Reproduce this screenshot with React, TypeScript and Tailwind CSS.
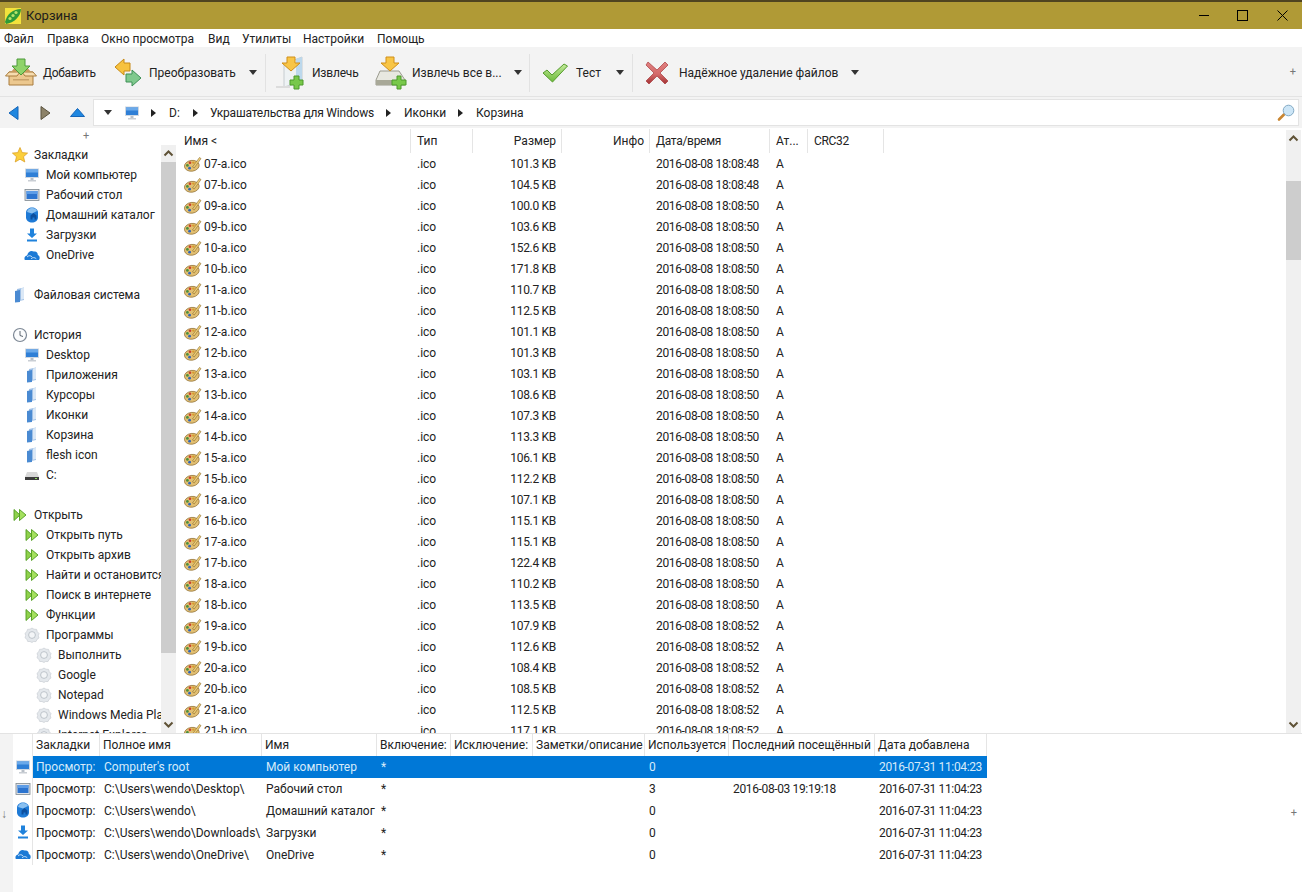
import type { ReactNode } from "react";

const FILES: [string, string, string][] = [
  ["07-a.ico", "101.3 KB", "48"], ["07-b.ico", "104.5 KB", "48"], ["09-a.ico", "100.0 KB", "50"], ["09-b.ico", "103.6 KB", "50"],
  ["10-a.ico", "152.6 KB", "50"], ["10-b.ico", "171.8 KB", "50"], ["11-a.ico", "110.7 KB", "50"], ["11-b.ico", "112.5 KB", "50"],
  ["12-a.ico", "101.1 KB", "50"], ["12-b.ico", "101.3 KB", "50"], ["13-a.ico", "103.1 KB", "50"], ["13-b.ico", "108.6 KB", "50"],
  ["14-a.ico", "107.3 KB", "50"], ["14-b.ico", "113.3 KB", "50"], ["15-a.ico", "106.1 KB", "50"], ["15-b.ico", "112.2 KB", "50"],
  ["16-a.ico", "107.1 KB", "50"], ["16-b.ico", "115.1 KB", "50"], ["17-a.ico", "115.1 KB", "50"], ["17-b.ico", "122.4 KB", "50"],
  ["18-a.ico", "110.2 KB", "50"], ["18-b.ico", "113.5 KB", "50"], ["19-a.ico", "107.9 KB", "52"], ["19-b.ico", "112.6 KB", "52"],
  ["20-a.ico", "108.4 KB", "52"], ["20-b.ico", "108.5 KB", "52"], ["21-a.ico", "112.5 KB", "52"], ["21-b.ico", "117.1 KB", "52"],
];

function Monitor() {
  return (
    <svg width="16" height="16" viewBox="0 0 16 16">
      <rect x="1" y="1.5" width="14" height="9.5" fill="#cfd8e2" />
      <rect x="2" y="2.5" width="12" height="7.5" fill="#2f7fd6" />
      <rect x="2" y="2.5" width="12" height="3" fill="#6aa9ea" />
      <rect x="6.5" y="11" width="3" height="2" fill="#b9c0c8" />
      <rect x="4" y="13" width="8" height="1.5" fill="#c9ced4" />
    </svg>
  );
}

function Desktop() {
  return (
    <svg width="16" height="16" viewBox="0 0 16 16">
      <rect x="1" y="2.5" width="14" height="11" fill="#dfe3e8" stroke="#7d8790" strokeWidth="0.8" />
      <rect x="2.5" y="4" width="11" height="8" fill="#2c74cf" />
      <rect x="2.5" y="4" width="11" height="3" fill="#5d9ce6" />
    </svg>
  );
}

function HomeDir() {
  return (
    <svg width="16" height="16" viewBox="0 0 16 16">
      <path d="M8 .5C11 .5 14 2.5 14 5.5V10.5C14 13.5 11 15.5 8 15.5C5 15.5 2 13.5 2 10.5V5.5C2 2.5 5 .5 8 .5Z" fill="#1e7ad6" />
      <path d="M8 1C10.5 1 12.5 2.3 13 4L8 6.5L3 5C3.5 2.5 5.5 1 8 1Z" fill="#8ac0f0" />
      <path d="M9.5 6L6.5 8.5V12.5H8.5V10.5H10.5V12.5H12.5V8.5Z" fill="#0d4f9e" />
    </svg>
  );
}

function Download() {
  return (
    <svg width="16" height="16" viewBox="0 0 16 16">
      <path d="M6 1.5H10V6.5H13L8 11L3 6.5H6Z" fill="#1f82dc" />
      <rect x="3" y="12.5" width="10" height="2" fill="#1f82dc" />
    </svg>
  );
}

function Cloud() {
  return (
    <svg width="16" height="16" viewBox="0 0 16 16">
      <path d="M.8 13C-.2 11 1 8.5 3.2 8.5C3.6 5 7 3 9.8 4.6C12 3.8 14 5.4 13.8 8C15.8 8.6 16.2 11.5 15 13Z" fill="#1c7ad6" />
      <path d="M3 10C4.5 8.3 6.8 8.3 8.2 10M7 11.8C8.5 10.2 10.8 10.2 12.3 11.8" stroke="#e6f2fc" strokeWidth="0.8" fill="none" />
    </svg>
  );
}

function Star() {
  return (
    <svg width="16" height="16" viewBox="0 0 16 16">
      <path d="M8 .5L10.2 5.6L15.6 6.1L11.5 9.7L12.8 15L8 12.2L3.2 15L4.5 9.7L.4 6.1L5.8 5.6Z" fill="#fbcf3c" stroke="#d99a1c" strokeWidth="0.7" />
    </svg>
  );
}

function FsDoc() {
  return (
    <svg width="16" height="16" viewBox="0 0 16 16">
      <path d="M5 2L12 .5V13L5 14.5Z" fill="#9fc0e6" />
      <path d="M3 4L8 3V15L3 15.5Z" fill="#4a8ad2" />
      <path d="M9 1.5L12 .8V12L9 12.8Z" fill="#dbe8f6" />
    </svg>
  );
}

function Clock() {
  return (
    <svg width="16" height="16" viewBox="0 0 16 16">
      <circle cx="8" cy="8" r="6.5" fill="#fbfcfd" stroke="#7c8794" strokeWidth="1.2" />
      <path d="M8 4V8.5L11 9.5" stroke="#5d6670" strokeWidth="1" fill="none" />
    </svg>
  );
}

function Drive() {
  return (
    <svg width="16" height="16" viewBox="0 0 16 16">
      <path d="M3 5H13L15 10H1Z" fill="#d8d8d8" />
      <rect x="1" y="10" width="14" height="3" fill="#3d3d3d" />
      <rect x="11" y="11" width="2" height="1" fill="#8fdc5c" />
    </svg>
  );
}

function Forward() {
  return (
    <svg width="16" height="16" viewBox="0 0 16 16">
      <path d="M2 2.5L8 8L2 13.5Z" fill="#8fd24c" stroke="#4e9a1e" strokeWidth="0.9" />
      <path d="M7.5 2.5L14 8L7.5 13.5Z" fill="#a4e05e" stroke="#4e9a1e" strokeWidth="0.9" />
    </svg>
  );
}

function Gear() {
  return (
    <svg width="16" height="16" viewBox="0 0 16 16">
      <path d="M8 1L10 2.2L12.6 2.4L13.3 4.7L15 6.5L14.3 8.8L15 11L13 12.4L12 14.6L9.6 14.5L8 15.5L6 14.5L3.7 14.5L2.9 12.3L1 10.8L1.7 8.5L1 6.3L2.8 4.7L3.5 2.4L6 2.2Z" fill="#e4e8ec" stroke="#c2c8ce" strokeWidth="0.6" />
      <circle cx="8" cy="8" r="3.4" fill="#f3f5f7" stroke="#b8bec5" strokeWidth="0.9" />
    </svg>
  );
}

function Palette() {
  return (
    <svg width="18" height="16" viewBox="0 0 18 16">
      <ellipse cx="7.8" cy="9.8" rx="7.4" ry="5.4" transform="rotate(-8 7.8 9.8)" fill="#e2bf72" stroke="#8f6d30" strokeWidth="0.7" />
      <circle cx="3.4" cy="9.4" r="1.4" fill="#4b8f3e" />
      <circle cx="6" cy="6.8" r="1.3" fill="#c9402c" />
      <circle cx="9.4" cy="6.6" r="1.2" fill="#d89a2c" />
      <circle cx="5.6" cy="12.2" r="1.4" fill="#3167b8" />
      <path d="M8.5 11L15.5 1.5L17 2.6L10.2 12Z" fill="#efcf78" stroke="#8a6a2c" strokeWidth="0.6" />
    </svg>
  );
}

function Caret() {
  return <div className="w-0 h-0 border-x-[4px] border-x-transparent border-t-[5px] border-t-[#333]" />;
}

function Sep() {
  return <div className="w-px h-[38px] bg-[#e2e2e2]" />;
}

function Crumb() {
  return <div className="w-0 h-0 border-y-[4px] border-y-transparent border-l-[5px] border-l-[#222]" />;
}

function AddIcon() {
  return (
    <svg width="32" height="32" viewBox="0 0 32 32">
      <path d="M4 15H28V28H4Z" fill="#ecc88f" stroke="#a97c3e" />
      <path d="M4 15L0.5 19H12L15 15ZM28 15L31.5 19H20L17 15Z" fill="#f6dcaf" stroke="#a97c3e" />
      <path d="M6 15L11 9H21L26 15Z" fill="#c99a5c" />
      <path d="M12 2H20V9H25L16 18L7 9H12Z" fill="#8fd36a" stroke="#4d9a3b" />
      <rect x="8" y="22" width="16" height="1.5" fill="#c9a26b" />
    </svg>
  );
}

function ConvertIcon() {
  return (
    <svg width="28" height="30" viewBox="0 0 28 30">
      <path d="M1 9L10 1V5H16V13H10V17Z" fill="#f7c23f" stroke="#c78a16" />
      <path d="M27 20L18 12V16H12V24H18V28Z" fill="#7fc98d" stroke="#3e8f57" />
    </svg>
  );
}

function ExtractIcon() {
  return (
    <svg width="32" height="34" viewBox="0 0 32 34">
      <path d="M8 8L26 1V26L8 31Z" fill="#eef2f4" stroke="#c6ccd0" />
      <path d="M20 3L26 1V26L20 27Z" fill="#bcd8ec" />
      <path d="M11 1H19V7H24L15 15L6 7H11Z" fill="#f8c546" stroke="#d08f18" />
      <rect x="0" y="30" width="14" height="2" fill="#dcdcdc" />
      <path d="M18 20H23V24H27V29H23V33H18V29H14V24H18Z" fill="#78c84a" stroke="#4d9a2a" />
    </svg>
  );
}

function ExtractAllIcon() {
  return (
    <svg width="32" height="34" viewBox="0 0 32 34">
      <path d="M5 15H24L30 24V29H1V24Z" fill="#e8e8e0" stroke="#9a9a8e" />
      <rect x="1" y="24" width="29" height="5" fill="#a8a898" />
      <path d="M11 1H19V7H24L15 15L6 7H11Z" fill="#f8c546" stroke="#d08f18" />
      <path d="M22 20H26V24H31V29H26V33H22V29H17V24H22Z" fill="#78c84a" stroke="#4d9a2a" />
    </svg>
  );
}

function CheckIcon() {
  return (
    <svg width="26" height="20" viewBox="0 0 26 20">
      <defs>
        <linearGradient id="chk" x1="0" y1="0" x2="0" y2="1">
          <stop offset="0" stopColor="#c4ea9c" />
          <stop offset="1" stopColor="#6dbb3a" />
        </linearGradient>
      </defs>
      <path d="M1 10L5 7L10 12L22 1L25.5 3L10.5 19Z" fill="url(#chk)" stroke="#559c2c" />
    </svg>
  );
}

function CrossIcon() {
  return (
    <svg width="24" height="24" viewBox="0 0 24 24">
      <defs>
        <linearGradient id="crs" x1="0" y1="0" x2="0" y2="1">
          <stop offset="0" stopColor="#e08080" />
          <stop offset="0.55" stopColor="#d46a6a" />
          <stop offset="1" stopColor="#a33234" />
        </linearGradient>
      </defs>
      <path d="M3 1L12 9L20 1L23 4L15 12L23 20L20 23L12 15L4 23L1 20L9 12L1 4Z" fill="url(#crs)" stroke="#a83a3c" strokeWidth="0.7" />
    </svg>
  );
}

function Magnifier() {
  return (
    <svg width="18" height="18" viewBox="0 0 18 18">
      <path d="M2 15.5L7 10.5" stroke="#c98632" strokeWidth="2.6" strokeLinecap="round" />
      <circle cx="11.5" cy="6.5" r="5.3" fill="#cde6f7" stroke="#82a9c4" />
    </svg>
  );
}

function Pea() {
  return (
    <svg width="16" height="16" viewBox="0 0 16 16">
      <rect width="16" height="16" fill="#f3e23c" />
      <path d="M0 14C2 6 8 1 16 1C16 8 9 15 1 16Z" fill="#2f9a38" />
      <circle cx="5" cy="10.5" r="1.6" fill="#b5e36b" />
      <circle cx="8" cy="7.5" r="1.6" fill="#b5e36b" />
      <circle cx="11" cy="4.5" r="1.6" fill="#b5e36b" />
    </svg>
  );
}

function SideItem({ icon, label, level }: { icon: ReactNode; label: string; level: 0 | 1 | 2 }) {
  const pad = level === 0 ? "pl-[12px]" : level === 1 ? "pl-[24px]" : "pl-[36px]";
  return (
    <div className={"flex items-center h-5 shrink-0 gap-[6px] whitespace-nowrap " + pad}>
      <span className="w-4 h-4 shrink-0">{icon}</span>
      <span>{label}</span>
    </div>
  );
}

function ScrollUp() {
  return (
    <svg width="15" height="17" viewBox="0 0 15 17" className="shrink-0">
      <path d="M3.5 10.5L7.5 6.5L11.5 10.5" stroke="#5f5236" strokeWidth="2" fill="none" />
    </svg>
  );
}

function ScrollDown() {
  return (
    <svg width="15" height="17" viewBox="0 0 15 17" className="shrink-0">
      <path d="M3.5 6.5L7.5 10.5L11.5 6.5" stroke="#5f5236" strokeWidth="2" fill="none" />
    </svg>
  );
}

function FileRow({ name, size, sec }: { name: string; size: string; sec: string }) {
  return (
    <div className="flex items-center h-[21px] shrink-0">
      <div className="w-[233px] flex items-center pl-[6px] gap-[2px]">
        <Palette />
        <span>{name}</span>
      </div>
      <div className="w-[62px] pl-[6px]">.ico</div>
      <div className="w-[89px] pr-[6px] text-right tracking-[-0.3px]">{size}</div>
      <div className="w-[88px]" />
      <div className="w-[120px] pl-[6px] whitespace-nowrap tracking-[-0.36px]">2016-08-08 18:08:{sec}</div>
      <div className="w-[38px] pl-[6px]">A</div>
    </div>
  );
}

function Th({ w, children, right }: { w: string; children?: ReactNode; right?: boolean }) {
  return (
    <div className={"h-full flex items-center border-r border-[#e5e5e5] whitespace-nowrap overflow-hidden " + w + (right ? " justify-end pr-[5px]" : " pl-[6px]")}>
      {children}
    </div>
  );
}

function BTh({ w, children }: { w: string; children: ReactNode }) {
  return (
    <div className={"h-full flex items-center pl-[3px] border-r border-[#e5e5e5] whitespace-nowrap overflow-hidden " + w}>
      {children}
    </div>
  );
}

const BOOKMARKS = [
  { icon: <Monitor />, path: "Computer's root", name: "Мой компьютер", used: "0", last: "" },
  { icon: <Desktop />, path: "C:\\Users\\wendo\\Desktop\\", name: "Рабочий стол", used: "3", last: "2016-08-03 19:19:18" },
  { icon: <HomeDir />, path: "C:\\Users\\wendo\\", name: "Домашний каталог", used: "0", last: "" },
  { icon: <Download />, path: "C:\\Users\\wendo\\Downloads\\", name: "Загрузки", used: "0", last: "" },
  { icon: <Cloud />, path: "C:\\Users\\wendo\\OneDrive\\", name: "OneDrive", used: "0", last: "" },
];

const MENU: [string, string][] = [
  ["Файл", "w-[43px]"], ["Правка", "w-[54px]"], ["Окно просмотра", "w-[107px]"], ["Вид", "w-[34px]"],
  ["Утилиты", "w-[61px]"], ["Настройки", "w-[74px]"], ["Помощь", "w-[60px]"],
];

export default function App() {
  return (
    <div className="w-[1302px] h-[892px] overflow-hidden flex flex-col bg-white text-[12px] text-[#222] font-['Roboto','Noto_Sans',sans-serif]">
      {/* title bar */}
      <div className="h-[2px] bg-[#4f4420] shrink-0" />
      <div className="h-[27px] shrink-0 bg-[#b09a36] flex items-center pl-[5px] text-[13px] text-[#1c1c1c]">
        <Pea />
        <span className="ml-[5px]">Корзина</span>
        <div className="ml-auto flex items-center pr-[14px]">
          <div className="w-[10px] h-px bg-black" />
          <div className="w-[11px] h-[11px] border border-black ml-[28px]" />
          <svg className="ml-[29px]" width="11" height="11" viewBox="0 0 11 11">
            <path d="M0.5 0.5L10.5 10.5M10.5 0.5L0.5 10.5" stroke="#000" strokeWidth="1" />
          </svg>
        </div>
      </div>

      {/* menu */}
      <div className="h-[18px] shrink-0 flex items-center pl-[4px] pt-[2px]">
        {MENU.map(([m, w]) => (
          <span key={m} className={w}>{m}</span>
        ))}
      </div>

      {/* toolbar */}
      <div className="h-[49px] shrink-0 bg-[#f3f3f3] flex items-center pl-[5px] pt-[2px] whitespace-nowrap">
        <AddIcon />
        <span className="ml-[6px] w-[52px] tracking-[-0.3px]">Добавить</span>
        <div className="ml-[19px]"><ConvertIcon /></div>
        <span className="ml-[7px] w-[84px]">Преобразовать</span>
        <div className="ml-[16px]"><Caret /></div>
        <div className="ml-[8px]"><Sep /></div>
        <div className="ml-[10px]"><ExtractIcon /></div>
        <span className="ml-[4px] w-[46px] tracking-[-0.2px]">Извлечь</span>
        <div className="ml-[17px]"><ExtractAllIcon /></div>
        <span className="ml-[5px] w-[86px]">Извлечь все в...</span>
        <div className="ml-[16px]"><Caret /></div>
        <div className="ml-[7px]"><Sep /></div>
        <div className="ml-[12px]"><CheckIcon /></div>
        <span className="ml-[8px] w-[25px]">Тест</span>
        <div className="ml-[15px]"><Caret /></div>
        <div className="ml-[8px]"><Sep /></div>
        <div className="ml-[12px]"><CrossIcon /></div>
        <span className="ml-[10px] w-[154px]">Надёжное удаление файлов</span>
        <div className="ml-[18px]"><Caret /></div>
        <span className="ml-auto mr-[6px] text-[#777] text-[11px]">+</span>
      </div>

      {/* address row */}
      <div className="h-[32px] shrink-0 bg-[#f3f3f3] border-t border-[#e3e3e3] flex items-center pl-[8px] pr-[3px]">
        <svg width="11" height="14" viewBox="0 0 11 14"><path d="M10 .5V13.5L1 7Z" fill="#1f87e0" stroke="#1565b8" /></svg>
        <svg className="ml-[21px]" width="11" height="14" viewBox="0 0 11 14"><path d="M1 .5V13.5L10 7Z" fill="#8c8268" stroke="#5a523e" /></svg>
        <svg className="ml-[19px]" width="15" height="9" viewBox="0 0 15 9"><path d="M.5 8.5L7.5 .5L14.5 8.5Z" fill="#1f87e0" stroke="#1565b8" /></svg>
        <div className="ml-[8px] flex-1 h-[27px] bg-white border border-[#e3e3e3] flex items-center pl-[10px] pr-[3px] whitespace-nowrap">
          <Caret />
          <div className="ml-[12px]"><Monitor /></div>
          <div className="ml-[11px]"><Crumb /></div>
          <span className="ml-[13px] w-[11px]">D:</span>
          <div className="ml-[13px]"><Crumb /></div>
          <span className="ml-[12px] w-[164px] tracking-[-0.2px]">Украшательства для Windows</span>
          <div className="ml-[12px]"><Crumb /></div>
          <span className="ml-[13px] w-[42px]">Иконки</span>
          <div className="ml-[12px]"><Crumb /></div>
          <span className="ml-[13px]">Корзина</span>
          <div className="ml-auto"><Magnifier /></div>
        </div>
      </div>

      {/* main */}
      <div className="h-[605px] shrink-0 flex overflow-hidden">
        <div className="w-[161px] shrink-0 flex flex-col overflow-hidden">
          <div className="h-[17px] shrink-0 flex items-center justify-center text-[#777] text-[11px] pl-[11px]">+</div>
          <SideItem level={0} icon={<Star />} label="Закладки" />
          <SideItem level={1} icon={<Monitor />} label="Мой компьютер" />
          <SideItem level={1} icon={<Desktop />} label="Рабочий стол" />
          <SideItem level={1} icon={<HomeDir />} label="Домашний каталог" />
          <SideItem level={1} icon={<Download />} label="Загрузки" />
          <SideItem level={1} icon={<Cloud />} label="OneDrive" />
          <div className="h-5 shrink-0" />
          <SideItem level={0} icon={<FsDoc />} label="Файловая система" />
          <div className="h-5 shrink-0" />
          <SideItem level={0} icon={<Clock />} label="История" />
          <SideItem level={1} icon={<Monitor />} label="Desktop" />
          <SideItem level={1} icon={<FsDoc />} label="Приложения" />
          <SideItem level={1} icon={<FsDoc />} label="Курсоры" />
          <SideItem level={1} icon={<FsDoc />} label="Иконки" />
          <SideItem level={1} icon={<FsDoc />} label="Корзина" />
          <SideItem level={1} icon={<FsDoc />} label="flesh icon" />
          <SideItem level={1} icon={<Drive />} label="C:" />
          <div className="h-5 shrink-0" />
          <SideItem level={0} icon={<Forward />} label="Открыть" />
          <SideItem level={1} icon={<Forward />} label="Открыть путь" />
          <SideItem level={1} icon={<Forward />} label="Открыть архив" />
          <SideItem level={1} icon={<Forward />} label="Найти и остановится" />
          <SideItem level={1} icon={<Forward />} label="Поиск в интернете" />
          <SideItem level={1} icon={<Forward />} label="Функции" />
          <SideItem level={1} icon={<Gear />} label="Программы" />
          <SideItem level={2} icon={<Gear />} label="Выполнить" />
          <SideItem level={2} icon={<Gear />} label="Google" />
          <SideItem level={2} icon={<Gear />} label="Notepad" />
          <SideItem level={2} icon={<Gear />} label="Windows Media Player" />
          <SideItem level={2} icon={<Gear />} label="Internet Explorer" />
        </div>

        {/* sidebar scrollbar */}
        <div className="w-[15px] shrink-0 mt-[17px] bg-[#f0f0f0] flex flex-col">
          <ScrollUp />
          <div className="h-[491px] bg-[#cdcdcd] shrink-0" />
          <div className="flex-1" />
          <ScrollDown />
        </div>
        <div className="w-[2px] shrink-0" />

        {/* file list */}
        <div className="flex-1 flex flex-col overflow-hidden">
          <div className="h-[25px] shrink-0 pt-[1px] flex items-center">
            <Th w="w-[233px]">Имя &lt;</Th>
            <Th w="w-[62px]">Тип</Th>
            <Th w="w-[89px]" right>Размер</Th>
            <Th w="w-[88px]" right>Инфо</Th>
            <Th w="w-[120px]"><span className="tracking-[-0.3px]">Дата/время</span></Th>
            <Th w="w-[38px]">Ат...</Th>
            <Th w="w-[76px]"><span className="tracking-[-0.3px]">CRC32</span></Th>
          </div>
          {FILES.map((f) => (
            <FileRow key={f[0]} name={f[0]} size={f[1]} sec={f[2]} />
          ))}
        </div>

        {/* list scrollbar */}
        <div className="w-[15px] shrink-0 mt-[2px] mr-px bg-[#f0f0f0] flex flex-col">
          <ScrollUp />
          <div className="h-[34px] shrink-0" />
          <div className="h-[79px] bg-[#cdcdcd] shrink-0" />
          <div className="flex-1" />
          <ScrollDown />
        </div>
      </div>

      {/* bottom panel */}
      <div className="flex-1 flex border-t border-[#e3e3e3]">
        <div className="w-[13px] shrink-0 bg-[#f3f3f3] flex flex-col items-start pl-[1px] pt-[71px] text-[#777]">↓</div>
        <div className="w-[20px] h-[131px] shrink-0 flex flex-col items-center pt-[22px] border-r border-[#e5e5e5]">
          {BOOKMARKS.map((b) => (
            <div key={b.name} className="h-[22px] flex items-center">{b.icon}</div>
          ))}
        </div>
        <div className="w-[954px] shrink-0 flex flex-col">
          <div className="h-[22px] flex items-center">
            <BTh w="w-[67px]">Закладки</BTh>
            <BTh w="w-[162px]">Полное имя</BTh>
            <BTh w="w-[115px]">Имя</BTh>
            <BTh w="w-[74px]">Включение:</BTh>
            <BTh w="w-[82px]">Исключение:</BTh>
            <BTh w="w-[112px]">Заметки/описание</BTh>
            <BTh w="w-[84px]">Используется</BTh>
            <BTh w="w-[146px]">Последний посещённый</BTh>
            <BTh w="w-[112px]">Дата добавлена</BTh>
          </div>
          {BOOKMARKS.map((b, i) => (
            <div key={b.name} className={"h-[22px] flex items-center whitespace-nowrap " + (i === 0 ? "bg-[#0078d7] text-[#d7ebfa]" : "")}>
              <div className="w-[67px] pl-[3px]">Просмотр:</div>
              <div className="w-[162px] pl-[4px]">{b.path}</div>
              <div className="w-[115px] pl-[4px]">{b.name}</div>
              <div className="w-[74px] pl-[4px]">*</div>
              <div className="w-[82px]" />
              <div className="w-[112px]" />
              <div className="w-[84px] pl-[4px]">{b.used}</div>
              <div className="w-[146px] pl-[4px] tracking-[-0.36px]">{b.last}</div>
              <div className="w-[112px] pl-[4px] tracking-[-0.36px]">2016-07-31 11:04:23</div>
            </div>
          ))}
        </div>
        <div className="flex-1 flex justify-end pr-[5px] pt-[71px] text-[#777] text-[11px]">+</div>
      </div>
    </div>
  );
}
